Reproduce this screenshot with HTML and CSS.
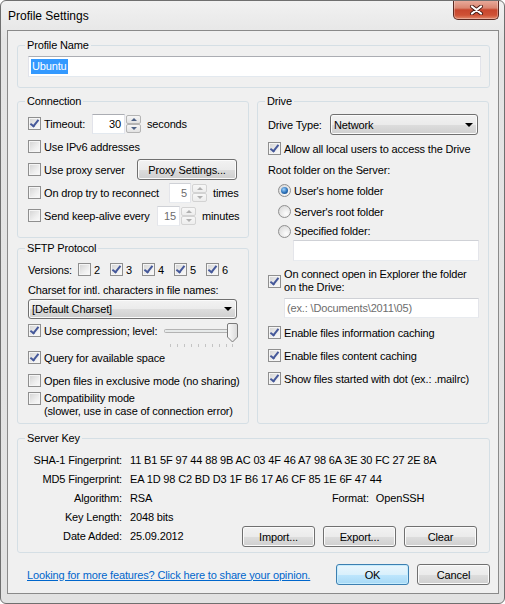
FILE: index.html
```html
<!DOCTYPE html>
<html lang="en">
<head>
  <meta charset="UTF-8">
  <title>Profile Settings</title>
  <link rel="stylesheet" href="styles.css">
</head>
<body>
<div class="window">
  <div class="titlebar">
    <span class="title">Profile Settings</span>
    <button class="close_btn">
      <svg width="15" height="10" viewBox="0 0 15 10">
        <path d="M3 1.5 L12 8.5 M12 1.5 L3 8.5" stroke="#4a1d15" stroke-width="4" stroke-linecap="round"/>
        <path d="M3 1.5 L12 8.5 M12 1.5 L3 8.5" stroke="#fff" stroke-width="2.2" stroke-linecap="round"/>
      </svg>
    </button>
  </div>

  <div class="client">
    <fieldset class="group profile_group">
      <legend>Profile Name</legend>
      <div class="textbox"><span class="selected">Ubuntu</span></div>
    </fieldset>

    <div class="columns">
      <div class="col_left">
        <fieldset class="group conn_group">
          <legend>Connection</legend>
          <div class="row">
            <span class="cb on"></span><span class="lbl w48">Timeout:</span>
            <span class="spin">
              <span class="textbox num w33">30</span>
              <span class="spin_btns"><i class="up"></i><i class="down"></i></span>
            </span>
            <span class="after_spin">seconds</span>
          </div>
          <div class="row">
            <span class="cb"></span><span class="lbl">Use IPv6 addresses</span>
          </div>
          <div class="row">
            <span class="cb"></span><span class="lbl w93">Use proxy server</span>
            <button class="btn proxy_btn">Proxy Settings...</button>
          </div>
          <div class="row">
            <span class="cb"></span><span class="lbl w125">On drop try to reconnect</span>
            <span class="spin off">
              <span class="textbox num w22">5</span>
              <span class="spin_btns"><i class="up"></i><i class="down"></i></span>
            </span>
            <span class="after_spin">times</span>
          </div>
          <div class="row">
            <span class="cb"></span><span class="lbl w113">Send keep-alive every</span>
            <span class="spin off">
              <span class="textbox num w23">15</span>
              <span class="spin_btns"><i class="up"></i><i class="down"></i></span>
            </span>
            <span class="after_spin">minutes</span>
          </div>
        </fieldset>

        <fieldset class="group sftp_group">
          <legend>SFTP Protocol</legend>
          <div class="row">
            <span class="versions_lbl">Versions:</span>
            <span class="ver"><span class="cb"></span>2</span>
            <span class="ver"><span class="cb on"></span>3</span>
            <span class="ver"><span class="cb on"></span>4</span>
            <span class="ver"><span class="cb on"></span>5</span>
            <span class="ver"><span class="cb on"></span>6</span>
          </div>
          <div class="caption">Charset for intl. characters in file names:</div>
          <div class="select charset">[Default Charset]</div>
          <div class="row">
            <span class="cb on"></span><span class="lbl w116">Use compression; level:</span>
            <svg class="slider" width="80" height="26" viewBox="0 0 80 26">
              <defs>
                <linearGradient id="thumbFill" x1="0" y1="0" x2="1" y2="0">
                  <stop offset="0" stop-color="#fbfbfb"/>
                  <stop offset="1" stop-color="#dadada"/>
                </linearGradient>
              </defs>
              <rect x="4.5" y="7.5" width="72" height="3" rx="1" fill="#e7eaea" stroke="#b3b3b3"/>
              <path d="M67.5 3 Q67.5 1.5 69 1.5 H76 Q77.5 1.5 77.5 3 V15 L72.5 20 L67.5 15 Z" fill="url(#thumbFill)" stroke="#7a7a7a"/>
              <g stroke="#c4c4c4">
                <path d="M10.5 22 V25 M17.5 22 V25 M24.5 22 V25 M31.5 22 V25 M38.5 22 V25 M45.5 22 V25 M52.5 22 V25 M59.5 22 V25 M66.5 22 V25 M72.5 22 V25"/>
              </g>
            </svg>
          </div>
          <div class="row gap_top">
            <span class="cb on"></span><span class="lbl">Query for available space</span>
          </div>
          <div class="row">
            <span class="cb"></span><span class="lbl">Open files in exclusive mode (no sharing)</span>
          </div>
          <div class="row multi">
            <span class="cb"></span><span class="lbl">Compatibility mode<br>(slower, use in case of connection error)</span>
          </div>
        </fieldset>
      </div>

      <fieldset class="group drive_group">
        <legend>Drive</legend>
        <div class="row drive_type">
          <span class="w62">Drive Type:</span>
          <div class="select w148">Network</div>
        </div>
        <div class="row">
          <span class="cb on"></span><span class="lbl">Allow all local users to access the Drive</span>
        </div>
        <div class="caption root_caption">Root folder on the Server:</div>
        <div class="radio_row"><span class="rb on"></span>User's home folder</div>
        <div class="radio_row"><span class="rb"></span>Server's root folder</div>
        <div class="radio_row short"><span class="rb"></span>Specified folder:</div>
        <div class="textbox off folder_box"></div>
        <div class="row multi centered explorer_row">
          <span class="cb on"></span><span class="lbl">On connect open in Explorer the folder<br>on the Drive:</span>
        </div>
        <div class="textbox off hint_box">(ex.: \Documents\2011\05)</div>
        <div class="row cache_row">
          <span class="cb on"></span><span class="lbl">Enable files information caching</span>
        </div>
        <div class="row">
          <span class="cb on"></span><span class="lbl">Enable files content caching</span>
        </div>
        <div class="row">
          <span class="cb on"></span><span class="lbl">Show files started with dot (ex.: .mailrc)</span>
        </div>
      </fieldset>
    </div>

    <fieldset class="group key_group">
      <legend>Server Key</legend>
      <div class="key_grid">
        <span class="key_label">SHA-1 Fingerprint:</span>
        <span class="key_value wide">11 B1 5F 97 44 88 9B AC 03 4F 46 A7 98 6A 3E 30 FC 27 2E 8A</span>
        <span class="key_label">MD5 Fingerprint:</span>
        <span class="key_value wide">EA 1D 98 C2 BD D3 1F B6 17 A6 CF 85 1E 6F 47 44</span>
        <span class="key_label">Algorithm:</span>
        <span class="key_value">RSA</span>
        <span class="key_format"><span>Format:</span><span>OpenSSH</span></span>
        <span class="key_label">Key Length:</span>
        <span class="key_value">2048 bits</span>
        <span class="key_label">Date Added:</span>
        <span class="key_value">25.09.2012</span>
        <div class="key_buttons">
          <button class="btn">Import...</button>
          <button class="btn">Export...</button>
          <button class="btn">Clear</button>
        </div>
      </div>
    </fieldset>

    <div class="footer">
      <a href="#" class="feedback">Looking for more features? Click here to share your opinion.</a>
      <button class="btn btn_default">OK</button>
      <button class="btn">Cancel</button>
    </div>
  </div>
</div>
</body>
</html>
```

FILE: styles.css
```css
* {
  box-sizing: border-box;
}
body {
  margin: 0;
  background: #fff;
  font-family: "Liberation Sans", Arial, sans-serif;
  font-size: 11px;
  letter-spacing: -0.15px;
  color: #000;
}

/* window frame */
.window {
  width: 505px;
  height: 604px;
  border: 1px solid #6f6f6f;
  border-radius: 6px;
  background: linear-gradient(#f1f1f1, #e4e4e4 40px, #e2e2e2);
  display: flex;
  flex-direction: column;
  overflow: hidden;
}
.titlebar {
  height: 29px;
  display: flex;
  justify-content: space-between;
  align-items: flex-start;
  padding: 0 5px 0 7px;
}
.title {
  font-size: 12px;
  letter-spacing: 0;
  margin-top: 8px;
}
.close_btn {
  width: 46px;
  height: 20px;
  margin-top: -1px;
  padding: 0;
  border: 1px solid #5b2a22;
  border-top: none;
  border-radius: 0 0 5px 5px;
  background: linear-gradient(#eaae9f, #da8671 42%, #c8462d 52%, #cf5236 80%, #e38a6c);
  box-shadow: inset 0 0 0 1px rgba(255, 255, 255, .3);
  display: flex;
  align-items: center;
  justify-content: center;
}
.client {
  margin: 0 5px 0 6px;
  height: 564px;
  border: 1px solid #8a8a8a;
  background: #f0f0f0;
  padding: 7px 8px 0 9px;
  display: flex;
  flex-direction: column;
}

/* group boxes */
.group {
  margin: 0;
  min-width: 0;
  border: 1px solid #d5dfe5;
  border-radius: 3px;
  padding: 3px 8px 10px 10px;
}
.group legend {
  line-height: 15px;
  padding: 0 2px;
  margin-left: -3px;
}
.profile_group {
  padding-bottom: 10px;
}
.columns {
  display: grid;
  grid-template-columns: 232px 232px;
  column-gap: 8px;
  margin-top: 6px;
}
.col_left {
  display: flex;
  flex-direction: column;
}
.sftp_group {
  flex: 1;
  margin-top: 3px;
  padding-top: 2px;
  padding-bottom: 2px;
}
.drive_group {
  padding-bottom: 33px;
}
.key_group {
  margin-top: 7px;
  padding: 4px 11px 7px 10px;
}

/* rows */
.row {
  display: flex;
  align-items: center;
  height: 23px;
  white-space: nowrap;
}
.row.multi {
  height: auto;
  align-items: flex-start;
  line-height: 13px;
}
.row.multi.centered {
  align-items: center;
}
.lbl {
  margin-left: 3px;
  flex: none;
}
.w48 { width: 48px; }
.w93 { width: 93px; }
.w113 { width: 113px; }
.w116 { width: 116px; }
.w125 { width: 125px; }
.w62 { width: 62px; flex: none; }
.w148 { width: 148px; }
.gap_top {
  margin-top: 4px;
}
.caption {
  height: 18px;
  line-height: 18px;
}

/* checkbox and radio */
.cb {
  position: relative;
  flex: none;
  width: 13px;
  height: 13px;
  border: 1px solid #8f8f8f;
  background: linear-gradient(135deg, #d2d2d2, #eeeeee 60%, #fbfbfb);
  box-shadow: inset 0 0 0 1px #f5f5f5;
}
.cb.on::after {
  content: "";
  position: absolute;
  left: 3px;
  top: 0;
  width: 3px;
  height: 7px;
  border: solid #45589a;
  border-width: 0 2px 2px 0;
  transform: rotate(38deg);
}
.rb {
  position: relative;
  flex: none;
  width: 13px;
  height: 13px;
  margin-right: 3px;
  border: 1px solid #8f8f8f;
  border-radius: 50%;
  background: radial-gradient(circle at 65% 70%, #fdfdfd, #e4e4e4 60%, #cfcfcf);
}
.rb.on::after {
  content: "";
  position: absolute;
  left: 2px;
  top: 2px;
  width: 7px;
  height: 7px;
  border-radius: 50%;
  background: radial-gradient(circle at 40% 35%, #9ed3ff, #2a6fb6 55%, #123f77);
}
.radio_row {
  display: flex;
  align-items: center;
  height: 21px;
  margin-left: 10px;
}
.radio_row.short {
  height: 18px;
}

/* text boxes and spinners */
.textbox {
  height: 21px;
  background: #fff;
  border: 1px solid;
  border-color: #abadb3 #e2e3ea #e3e9ef #e2e3ea;
  padding: 0 2px;
  display: flex;
  align-items: center;
}
.textbox.off {
  border-color: #cfd1d6 #e4e5ea #e8ebef #e4e5ea;
  color: #6d6d6d;
}
.selected {
  background: #3399ff;
  color: #fff;
  line-height: 15px;
  padding: 0 1px;
}
.spin {
  display: flex;
  align-items: center;
}
.num {
  justify-content: flex-end;
  padding-right: 3px;
  height: 20px;
}
.w33 { width: 33px; }
.w22 { width: 22px; }
.w23 { width: 23px; }
.spin_btns {
  display: flex;
  flex-direction: column;
  margin-left: 1px;
}
.spin_btns i {
  width: 15px;
  height: 9px;
  border: 1px solid #b4b4b4;
  border-radius: 2px;
  background: linear-gradient(#f6f6f6, #e2e2e2);
  display: flex;
  align-items: center;
  justify-content: center;
}
.spin_btns .up::after {
  content: "";
  border-left: 3px solid transparent;
  border-right: 3px solid transparent;
  border-bottom: 3px solid #4d6185;
}
.spin_btns .down::after {
  content: "";
  border-left: 3px solid transparent;
  border-right: 3px solid transparent;
  border-top: 3px solid #4d6185;
}
.spin.off .num {
  color: #6d6d6d;
  border-color: #cfd1d6 #e4e5ea #e8ebef #e4e5ea;
}
.spin.off .spin_btns i {
  border-color: #d3d3d3;
  background: linear-gradient(#f7f7f7, #ededed);
}
.spin.off .up::after {
  border-bottom-color: #b0b0b0;
}
.spin.off .down::after {
  border-top-color: #b0b0b0;
}
.after_spin {
  margin-left: 6px;
}

/* buttons and drop-downs */
.btn {
  height: 21px;
  padding: 0;
  border: 1px solid #707070;
  border-radius: 3px;
  background: linear-gradient(#f2f2f2, #ebebeb 50%, #dddddd 51%, #cfcfcf);
  box-shadow: inset 0 0 0 1px #fbfbfb;
  font: inherit;
  letter-spacing: inherit;
  color: #000;
}
.btn_default {
  border-color: #3c7fb1;
  background: linear-gradient(#eaf6fd, #d9f0fc 50%, #bee6fd 51%, #a7d9f5);
  box-shadow: inset 0 0 0 1px #c6ecfd;
}
.proxy_btn {
  width: 100px;
}
.select {
  height: 21px;
  border: 1px solid #707070;
  border-radius: 3px;
  background: linear-gradient(#f2f2f2, #ebebeb 50%, #dddddd 51%, #cfcfcf);
  box-shadow: inset 0 0 0 1px #fbfbfb;
  display: flex;
  align-items: center;
  justify-content: space-between;
  padding: 0 4px 0 3px;
}
.select::after {
  content: "";
  border-left: 4px solid transparent;
  border-right: 4px solid transparent;
  border-top: 4px solid #000;
}
.charset {
  width: 209px;
  height: 20px;
}
.slider {
  flex: none;
  margin-top: 9px;
}

/* versions line */
.versions_lbl {
  width: 50px;
}
.ver {
  display: flex;
  align-items: center;
  gap: 3px;
  width: 32px;
}

/* drive column */
.drive_type {
  height: 25px;
}
.root_caption {
  height: 20px;
  line-height: 20px;
}
.folder_box {
  margin-left: 25px;
  width: 186px;
}
.explorer_row {
  margin-top: 7px;
}
.hint_box {
  margin: 4px 0 0 16px;
  width: 195px;
  height: 20px;
}
.cache_row {
  margin-top: 3px;
}

/* server key */
.key_grid {
  display: grid;
  grid-template-columns: 94px 104px 235px;
  grid-auto-rows: 19px;
  column-gap: 8px;
  align-items: center;
  white-space: nowrap;
}
.key_label {
  text-align: right;
}
.key_value.wide {
  grid-column: span 2;
}
.key_format {
  display: flex;
  gap: 7px;
  padding-left: 90px;
}
.key_buttons {
  grid-column: 3;
  grid-row: 4 / 6;
  align-self: end;
  display: flex;
  gap: 8px;
  margin-bottom: -2px;
}
.key_buttons .btn {
  width: 73px;
}

/* bottom line */
.footer {
  display: flex;
  align-items: center;
  gap: 8px;
  margin-top: 11px;
  padding-left: 10px;
}
.feedback {
  color: #0066cc;
  margin-right: auto;
}
.footer .btn {
  width: 73px;
}
```
